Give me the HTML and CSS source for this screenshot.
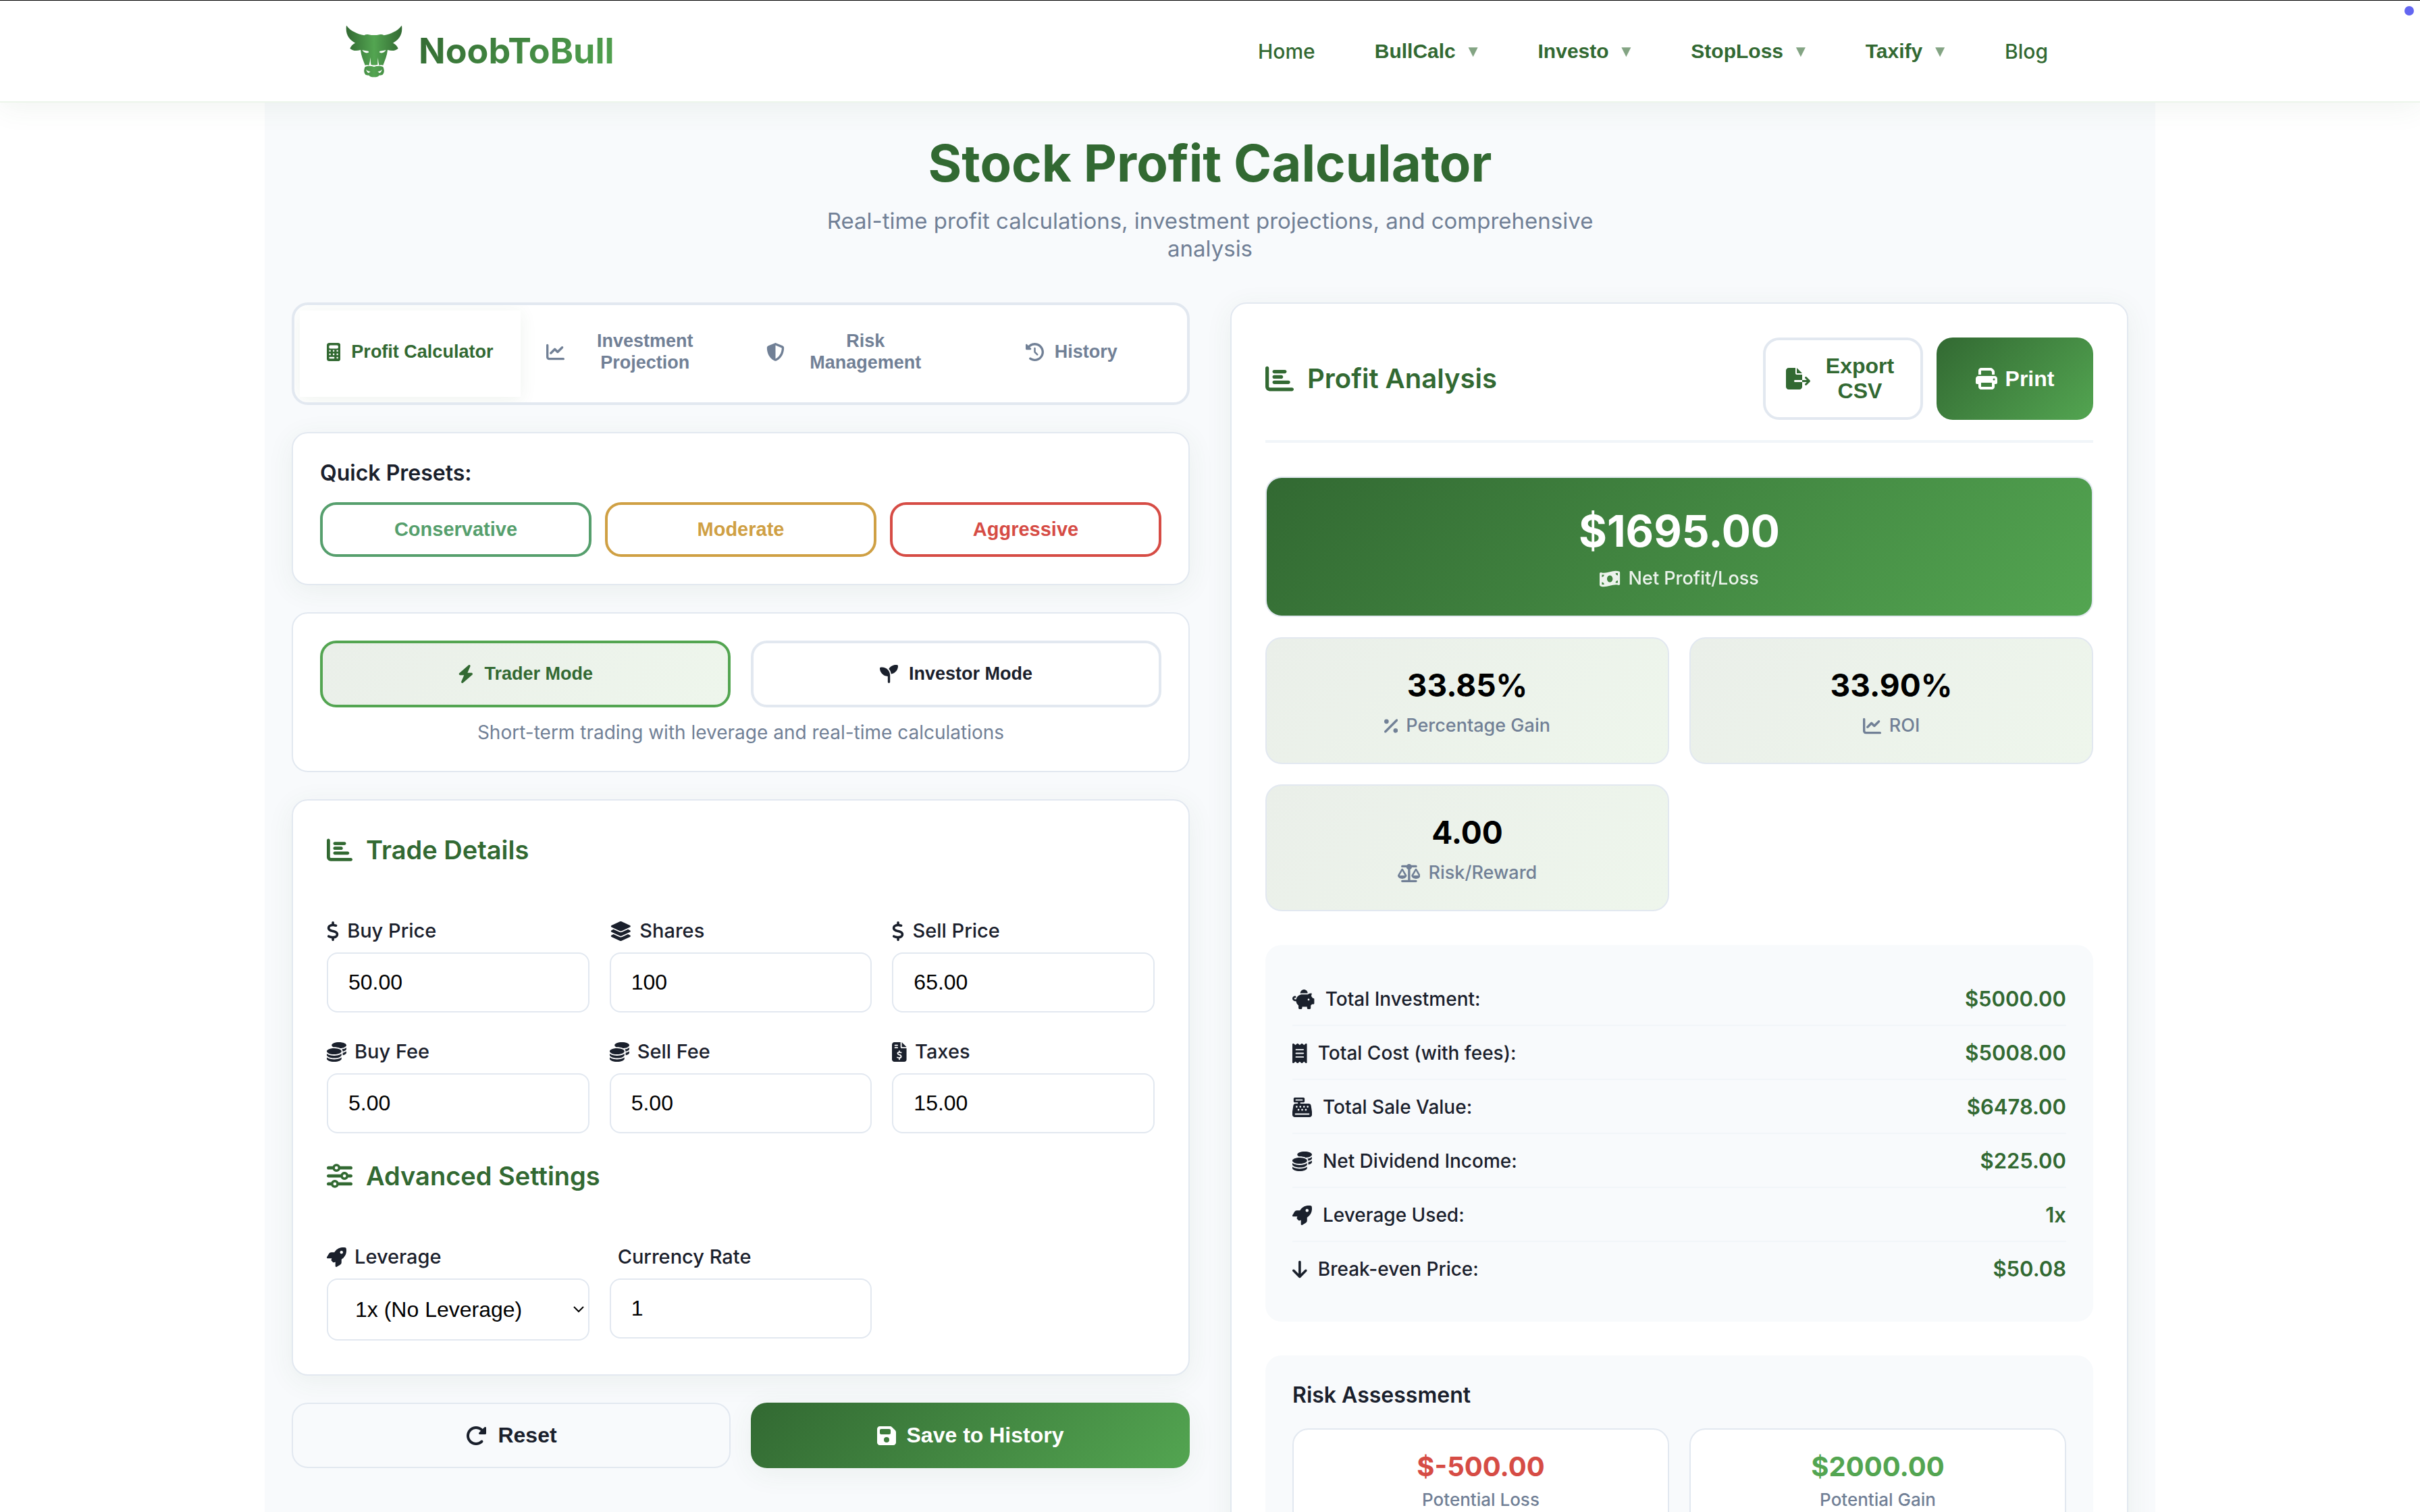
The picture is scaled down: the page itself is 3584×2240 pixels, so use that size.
FILE: index.html
```html
<!DOCTYPE html>
<html lang="en">
<head>
<meta charset="utf-8">
<meta name="viewport" content="width=device-width, initial-scale=1">
<title>Stock Profit Calculator | NoobToBull</title>
<link rel="stylesheet" href="styles.css">
</head>
<body>
<svg class="sprite" aria-hidden="true">
  <symbol id="i-bar" viewBox="0 0 512 512"><path d="M32 32c17.700 0 32 14.300 32 32V400c0 8.800 7.200 16 16 16H480c17.700 0 32 14.300 32 32s-14.300 32-32 32H80c-44.200 0-80-35.800-80-80V64C0 46.300 14.300 32 32 32zm96 96c0-17.700 14.300-32 32-32l192 0c17.700 0 32 14.300 32 32s-14.300 32-32 32l-192 0c-17.700 0-32-14.300-32-32zm32 64H288c17.700 0 32 14.300 32 32s-14.300 32-32 32H160c-17.700 0-32-14.300-32-32s14.300-32 32-32zm0 96H416c17.700 0 32 14.300 32 32s-14.300 32-32 32H160c-17.700 0-32-14.300-32-32s14.300-32 32-32z"/></symbol>
  <symbol id="i-line" viewBox="0 0 512 512"><path d="M64 64c0-17.700-14.300-32-32-32S0 46.300 0 64V400c0 44.200 35.800 80 80 80H480c17.700 0 32-14.300 32-32s-14.300-32-32-32H80c-8.800 0-16-7.200-16-16V64zm406.600 86.600c12.500-12.500 12.500-32.800 0-45.300s-32.800-12.500-45.300 0L320 210.700l-57.400-57.400c-12.500-12.500-32.800-12.500-45.300 0l-112 112c-12.500 12.500-12.500 32.800 0 45.300s32.800 12.500 45.300 0L240 221.300l57.400 57.400c12.500 12.500 32.800 12.500 45.300 0l128-128z"/></symbol>
  <symbol id="i-calc" viewBox="0 0 384 512"><path fill-rule="evenodd" d="M64 0C28.700 0 0 28.700 0 64V448c0 35.300 28.700 64 64 64H320c35.300 0 64-28.700 64-64V64c0-35.300-28.700-64-64-64H64zM96 64H288c17.700 0 32 14.300 32 32v32c0 17.700-14.300 32-32 32H96c-17.700 0-32-14.300-32-32V96c0-17.700 14.300-32 32-32zM64 224a24 24 0 1 0 48 0 24 24 0 1 0-48 0zM168 224a24 24 0 1 0 48 0 24 24 0 1 0-48 0zM272 224a24 24 0 1 0 48 0 24 24 0 1 0-48 0zM64 320a24 24 0 1 0 48 0 24 24 0 1 0-48 0zM168 320a24 24 0 1 0 48 0 24 24 0 1 0-48 0zM272 320a24 24 0 1 0 48 0 24 24 0 1 0-48 0zM88 392h104a24 24 0 0 1 0 48H88a24 24 0 0 1 0-48zM272 416a24 24 0 1 0 48 0 24 24 0 1 0-48 0z"/></symbol>
  <symbol id="i-shield" viewBox="0 0 512 512"><path d="M256 0c4.600 0 9.200 1 13.400 2.900L457.700 82.800c22 9.300 38.400 31 38.300 57.200c-.5 99.200-41.300 280.700-213.600 363.200c-16.700 8-36.100 8-52.800 0C57.300 420.700 16.500 239.200 16 140c-.1-26.200 16.300-47.900 38.300-57.200L242.700 2.900C246.800 1 251.400 0 256 0zm0 66.800V444.800C394 378 431.100 230.100 432 141.400L256 66.800l0 0z"/></symbol>
  <symbol id="i-history" viewBox="0 0 512 512"><path d="M75 75L41 41C25.900 25.900 0 36.600 0 57.900V168c0 13.300 10.700 24 24 24H134.100c21.400 0 32.100-25.900 17-41l-30.800-30.800C155 85.500 203 64 256 64c106 0 192 86 192 192s-86 192-192 192c-40.800 0-78.600-12.700-109.700-34.400c-14.500-10.100-34.400-6.600-44.600 7.900s-6.600 34.400 7.900 44.600C151.200 495 201.700 512 256 512c141.400 0 256-114.600 256-256S397.400 0 256 0C185.300 0 121.300 28.700 75 75zm181 53c-13.300 0-24 10.700-24 24V256c0 6.400 2.500 12.500 7 17l72 72c9.400 9.400 24.600 9.400 33.900 0s9.400-24.600 0-33.900l-65-65V152c0-13.300-10.700-24-24-24z"/></symbol>
  <symbol id="i-bolt" viewBox="0 0 448 512"><path d="M349.400 44.600c5.900-13.700 1.500-29.700-10.600-38.500s-28.600-8-39.900 1.800l-256 224c-10 8.800-13.600 22.900-8.900 35.300S50.700 288 64 288H175.500L98.600 467.400c-5.900 13.700-1.500 29.700 10.600 38.500s28.600 8 39.900-1.800l256-224c10-8.800 13.600-22.900 8.900-35.300s-16.600-20.700-30-20.700H272.500L349.400 44.600z"/></symbol>
  <symbol id="i-seed" viewBox="0 0 512 512"><path d="M512 32c0 113.600-84.600 207.500-194.200 222c-7.100-53.400-30.600-101.600-65.300-139.300C290.800 46.300 364 0 448 0h32c17.700 0 32 14.300 32 32zM0 96C0 78.300 14.300 64 32 64H64c123.700 0 224 100.300 224 224v32V480c0 17.700-14.300 32-32 32s-32-14.300-32-32V320C100.300 320 0 219.700 0 96z"/></symbol>
  <symbol id="i-dollar" viewBox="0 0 320 512"><path d="M160 0c17.700 0 32 14.300 32 32V67.700c1.600 .2 3.100 .4 4.700 .7c.4 .1 .7 .1 1.100 .2l48 8.800c17.400 3.200 28.900 19.900 25.700 37.200s-19.900 28.900-37.200 25.700l-47.500-8.700c-31.300-4.600-58.900-1.500-78.300 6.200s-27.200 18.300-29 28.100c-2 10.700-.5 16.700 1.200 20.400c1.800 3.900 5.500 8.300 12.800 13.200c16.300 10.700 41.300 17.700 73.700 26.300l2.900 .8c28.600 7.600 63.600 16.800 89.600 33.800c14.200 9.300 27.600 21.900 35.900 39.500c8.500 17.900 10.300 37.900 6.400 59.200c-6.900 38-33.100 63.400-65.600 76.700c-13.700 5.600-28.600 9.200-44.400 11V480c0 17.700-14.300 32-32 32s-32-14.300-32-32V445.100c-.4-.1-.9-.1-1.300-.2l-.2 0 0 0c-24.400-3.800-64.500-14.300-91.500-26.300c-16.100-7.200-23.400-26.100-16.200-42.200s26.100-23.400 42.200-16.200c20.900 9.300 55.300 18.500 75.200 21.600c31.900 4.700 58.200 2 76-5.300c16.900-6.900 24.600-16.900 26.800-28.900c1.900-10.600 .4-16.700-1.300-20.400c-1.900-4-5.600-8.400-13-13.300c-16.400-10.700-41.500-17.700-74-26.300l-2.800-.7 0 0C119.400 279.300 84.400 270 58.400 253c-14.200-9.300-27.500-22-35.800-39.600c-8.400-17.900-10.100-37.900-6.100-59.200C23.700 116 52.300 91.200 84.800 78.300c13.300-5.300 27.900-8.900 43.200-11V32c0-17.700 14.300-32 32-32z"/></symbol>
  <symbol id="i-layers" viewBox="0 0 576 512"><path d="M264.500 5.200c14.900-6.900 32.100-6.900 47 0l218.600 101c8.500 3.900 13.900 12.400 13.900 21.800s-5.400 17.900-13.900 21.800l-218.600 101c-14.900 6.900-32.100 6.900-47 0L45.900 149.800C37.400 145.800 32 137.300 32 128s5.400-17.900 13.900-21.800L264.500 5.200zM476.900 209.600l53.200 24.600c8.500 3.900 13.900 12.400 13.900 21.800s-5.400 17.900-13.900 21.800l-218.600 101c-14.900 6.900-32.100 6.900-47 0L45.900 277.800C37.400 273.800 32 265.300 32 256s5.400-17.900 13.900-21.800l53.200-24.600 152 70.200c23.400 10.800 50.400 10.800 73.800 0l152-70.200zm-152 198.200l152-70.200 53.200 24.600c8.500 3.900 13.900 12.400 13.900 21.800s-5.400 17.900-13.900 21.800l-218.600 101c-14.900 6.900-32.100 6.900-47 0L45.900 405.800C37.400 401.800 32 393.300 32 384s5.400-17.900 13.900-21.800l53.200-24.600 152 70.200c23.400 10.800 50.400 10.800 73.800 0z"/></symbol>
  <symbol id="i-coins" viewBox="0 0 512 512"><path d="M512 80c0 18-14.300 34.600-38.400 48c-29.100 16.100-72.500 27.500-122.300 30.900c-3.700-1.800-7.400-3.500-11.300-5C300.600 137.400 248.200 128 192 128c-8.300 0-16.400 .2-24.500 .6l-1.100-.6C142.300 114.600 128 98 128 80c0-44.200 86-80 192-80S512 35.800 512 80zM160.700 161.100c10.200-.7 20.700-1.100 31.300-1.100c62.200 0 117.400 12.300 152.500 31.400C369.300 204.900 384 221.700 384 240c0 4-.7 7.900-2.100 11.700c-4.600 13.200-17 25.300-35 35.500c-.5 .3-.9 .5-1.300 .7c-35 19.400-90.800 32-153.600 32c-59.600 0-112.900-11.300-148.200-29.100c-1.900-.9-3.700-1.900-5.500-2.900C14.300 274.600 0 258 0 240c0-34.800 53.400-64.500 128-75.400c10.500-1.500 21.400-2.700 32.700-3.500zM416 240c0-21.900-10.600-39.900-24.100-53.400c28.300-4.400 54.200-11.400 76.200-20.500c16.300-6.800 31.500-15.200 43.900-25.500V176c0 19.300-16.500 37.100-43.800 50.900c-14.600 7.400-32.400 13.700-52.400 18.500c.1-1.800 .2-3.500 .2-5.300zm-32 96c0 18-14.300 34.600-38.400 48c-1.800 1-3.600 1.900-5.500 2.900C304.900 404.700 251.600 416 192 416c-62.800 0-118.600-12.600-153.600-32C14.300 370.600 0 354 0 336V300.600c12.500 10.300 27.600 18.700 43.900 25.500C83.400 342.600 135.800 352 192 352s108.600-9.400 148.100-25.900c7.800-3.200 15.300-6.900 22.400-10.900c6.100-3.400 11.800-7.200 17.200-11.200c1.500-1.100 2.900-2.300 4.300-3.400V336zm32 0V278.100c19-4.200 36.500-9.500 52.100-16c16.300-6.800 31.500-15.200 43.900-25.500V272c0 10.500-5 21-14.900 30.900c-16.300 16.300-45 29.700-81.300 38.400c.1-1.700 .2-3.500 .2-5.300zM192 448c56.200 0 108.600-9.400 148.100-25.900c16.300-6.800 31.500-15.200 43.900-25.500V432c0 44.200-86 80-192 80S0 476.200 0 432V396.600c12.500 10.300 27.600 18.700 43.900 25.500C83.400 438.600 135.800 448 192 448z"/></symbol>
  <symbol id="i-invoice" viewBox="0 0 384 512"><path fill-rule="evenodd" d="M64 0C28.700 0 0 28.700 0 64V448c0 35.300 28.700 64 64 64H320c35.300 0 64-28.700 64-64V160H256c-17.700 0-32-14.300-32-32V0H64zM256 0V128H384L256 0zM64 80c0-8.800 7.200-16 16-16h64c8.800 0 16 7.200 16 16s-7.200 16-16 16H80c-8.800 0-16-7.200-16-16zm0 64c0-8.800 7.200-16 16-16h64c8.800 0 16 7.200 16 16s-7.200 16-16 16H80c-8.800 0-16-7.200-16-16z"/><path fill="none" stroke="#fff" stroke-width="32" stroke-linecap="round" d="M192 232v28M192 420v28M240 272c-18-8-34-11-50-11-24 0-42 12-42 32 0 47 92 26 92 78 0 25-20 40-47 40-20 0-37-6-53-13"/></symbol>
  <symbol id="i-sliders" viewBox="0 0 512 512"><path d="M0 416c0 17.700 14.300 32 32 32l54.700 0c12.300 28.300 40.500 48 73.300 48s61-19.700 73.300-48L480 448c17.700 0 32-14.300 32-32s-14.300-32-32-32l-246.700 0c-12.300-28.300-40.500-48-73.300-48s-61 19.700-73.300 48L32 384c-17.700 0-32 14.300-32 32zm128 0a32 32 0 1 1 64 0 32 32 0 1 1 -64 0zM320 256a32 32 0 1 1 64 0 32 32 0 1 1 -64 0zm32-80c-32.800 0-61 19.700-73.300 48L32 224c-17.700 0-32 14.300-32 32s14.300 32 32 32l246.700 0c12.300 28.300 40.500 48 73.300 48s61-19.700 73.300-48l54.700 0c17.700 0 32-14.300 32-32s-14.300-32-32-32l-54.700 0c-12.300-28.300-40.500-48-73.300-48zM192 128a32 32 0 1 1 0-64 32 32 0 1 1 0 64zm73.300-64C253 35.700 224.800 16 192 16s-61 19.700-73.300 48L32 64C14.300 64 0 78.300 0 96s14.300 32 32 32l86.700 0c12.300 28.300 40.500 48 73.300 48s61-19.700 73.300-48L480 128c17.700 0 32-14.300 32-32s-14.300-32-32-32L265.300 64z"/></symbol>
  <symbol id="i-rocket" viewBox="0 0 512 512"><path d="M156.600 384.900L125.700 354c-8.500-8.500-11.500-20.800-7.700-32.200c3-8.900 7-20.500 11.800-33.800L24 288c-8.600 0-16.600-4.600-20.900-12.100s-4.200-16.700 .2-24.100l52.500-88.500c13-21.900 36.500-35.300 61.900-35.300l82.300 0c2.400-4 4.800-7.700 7.200-11.300C289.100-4.100 411.100-8.100 483.900 5.300c11.600 2.100 20.600 11.200 22.800 22.800c13.400 72.900 9.300 194.800-111.400 276.700c-3.500 2.400-7.300 4.800-11.300 7.200v82.300c0 25.400-13.400 49-35.300 61.900l-88.500 52.500c-7.400 4.400-16.600 4.500-24.100 .2s-12.100-12.200-12.100-20.900V380.800c-14.100 4.900-26.400 8.900-35.700 11.900c-11.200 3.600-23.400 .5-31.800-7.800zM384 168a40 40 0 1 0 0-80 40 40 0 1 0 0 80z"/></symbol>
  <symbol id="i-redo" viewBox="0 0 512 512"><path d="M463.500 224H472c13.300 0 24-10.700 24-24V72c0-9.700-5.800-18.500-14.800-22.200s-19.300-1.700-26.200 5.200L413.400 96.600c-87.600-86.500-228.700-86.200-315.800 1c-87.500 87.500-87.500 229.300 0 316.800s229.300 87.500 316.800 0c12.500-12.500 12.500-32.800 0-45.300s-32.800-12.500-45.300 0c-62.500 62.500-163.800 62.500-226.300 0s-62.500-163.800 0-226.300c62.200-62.200 162.700-62.500 225.300-1L327 183c-6.900 6.900-8.900 17.200-5.200 26.200s12.500 14.800 22.200 14.800H463.500z"/></symbol>
  <symbol id="i-save" viewBox="0 0 448 512"><path fill-rule="evenodd" d="M64 32C28.700 32 0 60.700 0 96V416c0 35.300 28.700 64 64 64H384c35.300 0 64-28.700 64-64V173.300c0-17-6.700-33.300-18.700-45.300L352 50.700C340 38.700 323.700 32 306.700 32H64zm0 96c0-17.700 14.300-32 32-32H288c17.700 0 32 14.300 32 32v64c0 17.700-14.300 32-32 32H96c-17.700 0-32-14.300-32-32V128zM224 288a64 64 0 1 1 0 128 64 64 0 1 1 0-128z"/></symbol>
  <symbol id="i-export" viewBox="0 0 576 512"><path d="M0 64C0 28.700 28.700 0 64 0H224V128c0 17.700 14.300 32 32 32H384V288H216c-13.300 0-24 10.700-24 24s10.700 24 24 24H384V448c0 35.300-28.700 64-64 64H64c-35.300 0-64-28.700-64-64V64zM384 336V288H494.100l-39-39c-9.400-9.400-9.400-24.600 0-33.900s24.600-9.400 33.900 0l80 80c9.400 9.400 9.400 24.600 0 33.900l-80 80c-9.400 9.400-24.600 9.400-33.900 0s-9.400-24.600 0-33.900l39-39H384zm0-208H256V0L384 128z"/></symbol>
  <symbol id="i-print" viewBox="0 0 512 512"><path fill-rule="evenodd" d="M128 0C92.700 0 64 28.700 64 64v96h64V64H354.700L384 93.300V160h64V93.300c0-17-6.700-33.300-18.700-45.300L400 18.700C388 6.700 371.700 0 354.700 0H128zM384 352v96H128V352H384zm64 32h32c17.700 0 32-14.300 32-32V256c0-35.300-28.700-64-64-64H64c-35.300 0-64 28.700-64 64v96c0 17.700 14.300 32 32 32H64v64c0 35.300 28.700 64 64 64H384c35.300 0 64-28.700 64-64V384zM432 248a24 24 0 1 1 0 48 24 24 0 1 1 0-48z"/></symbol>
  <symbol id="i-bill" viewBox="0 0 576 512"><path fill-rule="evenodd" d="M0 112.500V422.300c0 18 10.100 35 27 41.300c87 32.500 174 10.300 261-11.900c79.800-20.300 159.600-40.700 239.300-18.900c23 6.300 48.700-9.500 48.700-33.400V89.700c0-18-10.100-35-27-41.300C462 15.900 375 38.100 288 60.300C208.200 80.600 128.400 100.900 48.700 79.100C25.600 72.800 0 88.600 0 112.500zM288 352c-44.200 0-80-43-80-96s35.800-96 80-96s80 43 80 96s-35.800 96-80 96zM64 352c35.300 0 64 28.700 64 64H64V352zm64-208c0 35.300-28.700 64-64 64V144h64zM512 304v64H448c0-35.300 28.700-64 64-64zM448 96h64v64c-35.300 0-64-28.700-64-64z"/></symbol>
  <symbol id="i-percent" viewBox="0 0 384 512"><path d="M374.600 118.600c12.500-12.500 12.500-32.800 0-45.300s-32.800-12.500-45.300 0l-320 320c-12.500 12.500-12.500 32.800 0 45.300s32.800 12.500 45.300 0l320-320zM128 128A64 64 0 1 0 0 128a64 64 0 1 0 128 0zM384 384a64 64 0 1 0 -128 0 64 64 0 1 0 128 0z"/></symbol>
  <symbol id="i-scale" viewBox="0 0 640 512"><path d="M384 32H512c17.700 0 32 14.300 32 32s-14.300 32-32 32H398.400c-5.200 25.800-22.900 47.100-46.400 57.300V448H512c17.700 0 32 14.300 32 32s-14.300 32-32 32H320 128c-17.700 0-32-14.300-32-32s14.300-32 32-32H288V153.300c-23.500-10.300-41.200-31.600-46.400-57.300H128c-17.700 0-32-14.300-32-32s14.300-32 32-32H256c14.600-19.400 37.800-32 64-32s49.400 12.600 64 32zm55.600 288H584.400L512 195.800 439.600 320zM512 416c-62.900 0-115.200-34-126-78.900c-2.600-11 1-22.300 6.700-32.100l95.200-163.200c5-8.600 14.200-13.800 24.100-13.800s19.100 5.300 24.100 13.800l95.200 163.200c5.700 9.800 9.300 21.100 6.700 32.100C627.200 382 574.900 416 512 416zM126.800 195.800L54.400 320H199.300L126.800 195.800zM.9 337.100c-2.600-11 1-22.300 6.700-32.100l95.200-163.200c5-8.600 14.200-13.800 24.100-13.800s19.100 5.300 24.100 13.800l95.200 163.200c5.700 9.800 9.300 21.100 6.700 32.100C242 382 189.700 416 126.800 416S11.700 382 .9 337.100z"/></symbol>
  <symbol id="i-piggy" viewBox="0 0 576 512"><path d="M400 96l0 .7c-5.300-.4-10.600-.7-16-.7H256c-16.500 0-32.500 2.100-47.800 6c-.1-2-.2-4-.2-6c0-53 43-96 96-96s96 43 96 96zm-16 32c3.500 0 7 .1 10.400 .3c4.200 .3 8.400 .7 12.600 1.300C424.600 109.100 450.800 96 480 96h11.500c10.400 0 18 9.800 15.500 19.900l-13.800 55.200c15.800 14.800 28.700 32.800 37.500 52.900H544c17.700 0 32 14.300 32 32v96c0 17.700-14.300 32-32 32H512c-9.100 12.100-19.900 22.900-32 32v64c0 17.700-14.300 32-32 32H416c-17.700 0-32-14.300-32-32V448H256v32c0 17.700-14.300 32-32 32H192c-17.700 0-32-14.300-32-32V416c-34.900-26.200-58.700-66.300-63.200-112H68c-37.600 0-68-30.400-68-68s30.400-68 68-68h4c13.300 0 24 10.700 24 24s-10.700 24-24 24H68c-11 0-20 9-20 20s9 20 20 20H99.200c12.100-59.800 57.700-107.500 116.300-122.800c12.900-3.400 26.500-5.200 40.500-5.200H384zm64 136a24 24 0 1 0 -48 0 24 24 0 1 0 48 0z"/></symbol>
  <symbol id="i-receipt" viewBox="0 0 384 512"><path fill-rule="evenodd" d="M14 2.200C22.500-1.700 32.500-.3 39.600 5.800L80 40.400 120.400 5.800c9-7.700 22.300-7.700 31.200 0L192 40.400 232.400 5.800c9-7.700 22.300-7.700 31.200 0L304 40.400 344.400 5.800c7.100-6.100 17.100-7.500 25.600-3.600s14 12.400 14 21.800V488c0 9.400-5.500 17.900-14 21.800s-18.500 2.500-25.600-3.600L304 471.600l-40.400 34.600c-9 7.700-22.300 7.700-31.200 0L192 471.600l-40.400 34.600c-9 7.700-22.300 7.700-31.200 0L80 471.600 39.600 506.200c-7.100 6.100-17.100 7.500-25.600 3.600S0 497.400 0 488V24C0 14.600 5.500 6.100 14 2.200zM96 144c-8.800 0-16 7.200-16 16s7.200 16 16 16H288c8.800 0 16-7.200 16-16s-7.200-16-16-16H96zM80 352c0 8.800 7.200 16 16 16H288c8.800 0 16-7.200 16-16s-7.200-16-16-16H96c-8.800 0-16 7.200-16 16zM96 240c-8.800 0-16 7.200-16 16s7.200 16 16 16H288c8.800 0 16-7.200 16-16s-7.200-16-16-16H96z"/></symbol>
  <symbol id="i-register" viewBox="0 0 512 512"><path fill-rule="evenodd" d="M64 0C46.300 0 32 14.300 32 32V96c0 17.700 14.300 32 32 32h80v32H87c-31.600 0-58.500 23.100-63.300 54.400L1.100 364.100C.4 368.800 0 373.600 0 378.400V448c0 35.300 28.700 64 64 64H448c35.300 0 64-28.700 64-64V378.400c0-4.800-.4-9.600-1.100-14.400L488.200 214.400C483.500 183.100 456.600 160 425 160H208V128h80c17.700 0 32-14.300 32-32V32c0-17.700-14.300-32-32-32H64zM96 48H256c8.800 0 16 7.200 16 16s-7.200 16-16 16H96c-8.800 0-16-7.200-16-16s7.200-16 16-16zM64 432c0-8.800 7.200-16 16-16H432c8.800 0 16 7.200 16 16s-7.200 16-16 16H80c-8.800 0-16-7.200-16-16zM88 240a24 24 0 1 0 48 0 24 24 0 1 0-48 0zM184 240a24 24 0 1 0 48 0 24 24 0 1 0-48 0zM280 240a24 24 0 1 0 48 0 24 24 0 1 0-48 0zM376 240a24 24 0 1 0 48 0 24 24 0 1 0-48 0zM136 320a24 24 0 1 0 48 0 24 24 0 1 0-48 0zM232 320a24 24 0 1 0 48 0 24 24 0 1 0-48 0zM328 320a24 24 0 1 0 48 0 24 24 0 1 0-48 0z"/></symbol>
  <symbol id="i-down" viewBox="0 0 384 512"><path d="M169.400 470.600c12.500 12.500 32.800 12.500 45.300 0l160-160c12.500-12.500 12.500-32.800 0-45.300s-32.800-12.500-45.300 0L224 370.800 224 64c0-17.700-14.300-32-32-32s-32 14.300-32 32l0 306.700L54.600 265.400c-12.500-12.500-32.800-12.500-45.300 0s-12.500 32.800 0 45.300l160 160z"/></symbol>
</svg>

<header class="topbar">
  <div class="topbar-inner">
    <a class="brand" href="#">
      <svg class="bull" viewBox="36 36 252 234" aria-hidden="true">
        <defs><linearGradient id="bullFill" x1="0" x2="1" y1="0" y2="0"><stop offset="0" stop-color="#326932"/><stop offset=".5" stop-color="#53a551"/><stop offset="1" stop-color="#326932"/></linearGradient></defs>
        <path fill="url(#bullFill)" fill-rule="evenodd" d="M39 38C56 62 88 76 118 82Q126 77 134 78Q142 79 150 81H174Q182 79 190 78Q198 77 206 82C236 76 268 62 285 38C290 76 275 101 246 116Q262 124 269 140Q252 156 222 147C220 172 210 194 202 215Q192 212 185 216Q179 197 180 180Q177 196 178 212Q162 217 148 212Q147 196 145 180Q145 197 139 216Q132 212 122 215C114 194 104 172 102 147Q72 156 55 140Q62 124 78 116C49 101 34 76 39 38zM109 148Q120 164 136 159Q141 156 136 152zM215 148Q204 164 188 159Q183 156 188 152zM122 222Q142 214 162 222Q182 214 202 222Q212 244 200 257Q192 260 184 260Q180 268 162 268Q144 268 140 260Q132 260 124 257Q112 244 122 222zM127 234Q129 246 138 250L146 243Q134 244 127 234zM197 234Q195 246 186 250L178 243Q190 244 197 234z"/>
      </svg>
      <span class="brand-name">NoobToBull</span>
    </a>
    <nav class="nav" aria-label="Main">
      <a class="nav-link" href="#">Home</a>
      <button class="nav-menu" type="button">BullCalc <span class="caret">▼</span></button>
      <button class="nav-menu" type="button">Investo <span class="caret">▼</span></button>
      <button class="nav-menu" type="button">StopLoss <span class="caret">▼</span></button>
      <button class="nav-menu" type="button">Taxify <span class="caret">▼</span></button>
      <a class="nav-link" href="#">Blog</a>
    </nav>
  </div>
  <span class="status-dot"></span>
</header>

<main class="page">
  <div class="intro">
    <h1>Stock Profit Calculator</h1>
    <p>Real-time profit calculations, investment projections, and comprehensive analysis</p>
  </div>

  <div class="columns">
    <div class="stack">
      <div class="tabs" role="tablist">
        <button class="tab active" role="tab" type="button" aria-selected="true"><svg class="ico w384"><use href="#i-calc"/></svg><span>Profit Calculator</span></button>
        <button class="tab" role="tab" type="button"><svg class="ico"><use href="#i-line"/></svg><span class="grow">Investment Projection</span></button>
        <button class="tab" role="tab" type="button"><svg class="ico"><use href="#i-shield"/></svg><span class="grow">Risk Management</span></button>
        <button class="tab" role="tab" type="button"><svg class="ico"><use href="#i-history"/></svg><span>History</span></button>
      </div>

      <section class="card">
        <h2 class="small-title">Quick Presets:</h2>
        <div class="presets">
          <button class="preset low" type="button">Conservative</button>
          <button class="preset mid" type="button">Moderate</button>
          <button class="preset high" type="button">Aggressive</button>
        </div>
      </section>

      <section class="card flat">
        <div class="modes">
          <button class="mode active" type="button"><svg class="ico w448"><use href="#i-bolt"/></svg>Trader Mode</button>
          <button class="mode" type="button"><svg class="ico"><use href="#i-seed"/></svg>Investor Mode</button>
        </div>
        <p class="mode-note">Short-term trading with leverage and real-time calculations</p>
      </section>

      <form class="card form">
        <h2 class="form-title"><svg class="ico"><use href="#i-bar"/></svg>Trade Details</h2>
        <div class="fields">
          <div class="field"><label for="buy"><svg class="ico w320"><use href="#i-dollar"/></svg>Buy Price</label><input id="buy" type="text" value="50.00"></div>
          <div class="field"><label for="shares"><svg class="ico w576"><use href="#i-layers"/></svg>Shares</label><input id="shares" type="text" value="100"></div>
          <div class="field"><label for="sell"><svg class="ico w320"><use href="#i-dollar"/></svg>Sell Price</label><input id="sell" type="text" value="65.00"></div>
          <div class="field"><label for="buyfee"><svg class="ico"><use href="#i-coins"/></svg>Buy Fee</label><input id="buyfee" type="text" value="5.00"></div>
          <div class="field"><label for="sellfee"><svg class="ico"><use href="#i-coins"/></svg>Sell Fee</label><input id="sellfee" type="text" value="5.00"></div>
          <div class="field"><label for="taxes"><svg class="ico w384"><use href="#i-invoice"/></svg>Taxes</label><input id="taxes" type="text" value="15.00"></div>
        </div>
        <h2 class="form-title later"><svg class="ico"><use href="#i-sliders"/></svg>Advanced Settings</h2>
        <div class="fields">
          <div class="field"><label for="leverage"><svg class="ico"><use href="#i-rocket"/></svg>Leverage</label>
            <div class="select-wrap"><select id="leverage"><option>1x (No Leverage)</option><option>2x</option><option>5x</option></select><svg class="chevron" viewBox="0 0 16 10" aria-hidden="true"><path d="M1 1l7 7 7-7"/></svg></div></div>
          <div class="field"><label class="bare" for="rate">Currency Rate</label><input id="rate" type="text" value="1"></div>
        </div>
      </form>

      <div class="actions">
        <button class="action" type="button"><svg class="ico"><use href="#i-redo"/></svg>Reset</button>
        <button class="action primary" type="button"><svg class="ico w448"><use href="#i-save"/></svg>Save to History</button>
      </div>
    </div>

    <section class="card results">
      <div class="results-head">
        <h2 class="results-title"><svg class="ico"><use href="#i-bar"/></svg>Profit Analysis</h2>
        <div class="results-tools">
          <button class="tool" type="button"><svg class="ico w576"><use href="#i-export"/></svg><span class="grow">Export CSV</span></button>
          <button class="tool primary" type="button"><svg class="ico"><use href="#i-print"/></svg>Print</button>
        </div>
      </div>

      <div class="metrics">
        <div class="metric main"><div class="metric-value">$1695.00</div><div class="metric-label"><svg class="ico w576"><use href="#i-bill"/></svg>Net Profit/Loss</div></div>
        <div class="metric"><div class="metric-value">33.85%</div><div class="metric-label"><svg class="ico w384"><use href="#i-percent"/></svg>Percentage Gain</div></div>
        <div class="metric"><div class="metric-value">33.90%</div><div class="metric-label"><svg class="ico"><use href="#i-line"/></svg>ROI</div></div>
        <div class="metric"><div class="metric-value">4.00</div><div class="metric-label"><svg class="ico w640"><use href="#i-scale"/></svg>Risk/Reward</div></div>
      </div>

      <dl class="details">
        <div class="row"><dt><svg class="ico w576"><use href="#i-piggy"/></svg>Total Investment:</dt><dd>$5000.00</dd></div>
        <div class="row"><dt><svg class="ico w384"><use href="#i-receipt"/></svg>Total Cost (with fees):</dt><dd>$5008.00</dd></div>
        <div class="row"><dt><svg class="ico"><use href="#i-register"/></svg>Total Sale Value:</dt><dd>$6478.00</dd></div>
        <div class="row"><dt><svg class="ico"><use href="#i-coins"/></svg>Net Dividend Income:</dt><dd>$225.00</dd></div>
        <div class="row"><dt><svg class="ico"><use href="#i-rocket"/></svg>Leverage Used:</dt><dd>1x</dd></div>
        <div class="row"><dt><svg class="ico w384"><use href="#i-down"/></svg>Break-even Price:</dt><dd>$50.08</dd></div>
      </dl>

      <div class="risk">
        <h3 class="small-title">Risk Assessment</h3>
        <div class="risk-grid">
          <div class="risk-card"><div class="risk-value loss">$-500.00</div><div class="risk-label">Potential Loss</div></div>
          <div class="risk-card"><div class="risk-value gain">$2000.00</div><div class="risk-label">Potential Gain</div></div>
        </div>
      </div>
    </section>
  </div>
</main>
</body>
</html>
```
FILE: styles.css
```css
:root {
  --green-dark: #326932;
  --green: #53a551;
  --gradient: linear-gradient(135deg, #326932 0%, #53a551 100%);
  --tint: linear-gradient(135deg, #eaefe9 0%, #eef6ec 100%);
  --ink: #1a202c;
  --muted: #718096;
  --line: #e2e8f0;
  --soft: #f8fafc;
  --shadow: 0 8px 40px rgba(50, 105, 50, .07);
  --ui: Inter, "Noto Sans", sans-serif;
  --control: "Liberation Sans", Arial, sans-serif;
}
* { box-sizing: border-box; }
html { scrollbar-width: none; }
body { margin: 0; background: #fff; color: var(--ink); font-family: var(--ui); }
h1, h2, h3, p, dl, dd { margin: 0; }
button { font-family: var(--control); font-weight: 700; margin: 0; cursor: pointer; }
.sprite { display: none; }

/* icons: height comes from --s, width from the glyph's own box */
.ico { flex: none; width: var(--s); height: var(--s); fill: currentColor; }
.ico.w320 { width: calc(var(--s) * .625); }
.ico.w384 { width: calc(var(--s) * .75); }
.ico.w448 { width: calc(var(--s) * .875); }
.ico.w576 { width: calc(var(--s) * 1.125); }
.ico.w640 { width: calc(var(--s) * 1.25); }

/* top bar */
.topbar { position: relative; z-index: 1; background: #fff; border-top: 1px solid #000; border-bottom: 2px solid #ecf5ea; box-shadow: var(--shadow); }
.topbar-inner { max-width: 2560px; margin: 0 auto; min-height: 149px; display: flex; align-items: center; justify-content: space-between; }
.brand { display: flex; align-items: center; gap: 24px; text-decoration: none; }
.bull { width: 84px; height: 78px; }
.brand-name { font-size: 52px; font-weight: 700; line-height: 70px; background: var(--gradient); -webkit-background-clip: text; background-clip: text; color: transparent; }
.nav { display: flex; align-items: center; gap: 10px; }
.nav-link, .nav-menu { padding: 16px 39px; font-size: 30px; line-height: 36px; color: var(--green-dark); }
.nav-link { font-weight: 500; text-decoration: none; }
.nav-menu { display: flex; align-items: center; gap: 14px; background: none; border: 0; padding-right: 35px; }
.caret { font-size: 24px; line-height: 24px; opacity: .6; }
.status-dot { position: absolute; top: 8px; right: 9px; width: 14px; height: 14px; border-radius: 50%; background: #6366f1; }

/* page */
.page { max-width: 2800px; margin: 0 auto; padding: 41px 40px; background: var(--soft); }
.intro { text-align: center; margin-bottom: 59px; }
h1 { font-size: 76px; line-height: 96px; font-weight: 700; color: var(--green-dark); margin-bottom: 18px; }
.intro p { max-width: 1200px; margin: 0 auto; font-size: 33px; line-height: 41px; color: var(--muted); }
.columns { display: grid; grid-template-columns: 1fr 1fr; gap: 60px; align-items: start; }
.stack { display: flex; flex-direction: column; gap: 40px; }

.card { background: #fff; border: 2px solid var(--line); border-radius: 24px; padding: 40px; box-shadow: var(--shadow); }
.card.flat { box-shadow: none; }
.small-title { font-size: 32px; line-height: 38px; font-weight: 600; }

/* tabs */
.tabs { display: grid; grid-template-columns: repeat(4, 1fr); padding: 8px; background: #fff; border: 4px solid var(--line); border-radius: 24px; overflow: hidden; }
.tab { --s: 27px; min-height: 128px; display: flex; align-items: center; justify-content: center; gap: 16px; padding: 0 38px 6px; background: none; border: 0; color: var(--muted); font-size: 27px; line-height: 32px; }
.tab.active { background: #fff; color: var(--green-dark); box-shadow: 0 4px 24px rgba(50, 105, 50, .08); }
.grow { flex: 1; text-align: center; }

/* presets and modes */
.presets { display: grid; grid-template-columns: repeat(3, 1fr); gap: 20px; margin-top: 24px; }
.preset { height: 81px; background: #fff; border: 4px solid currentColor; border-radius: 24px; font-size: 29px; }
.low { color: #569f6d; }
.mid { color: #cfa044; }
.high { color: #d64c45; }
.modes { display: grid; grid-template-columns: 1fr 1fr; gap: 30px; }
.mode { --s: 27px; height: 99px; display: flex; align-items: center; justify-content: center; gap: 16px; background: #fff; border: 4px solid var(--line); border-radius: 24px; color: var(--ink); font-size: 27px; }
.mode.active { background: var(--tint); border-color: var(--green); color: var(--green-dark); }
.mode-note { margin-top: 20px; text-align: center; color: var(--muted); font-size: 28px; line-height: 34px; }

/* form */
.form { padding: 50px; }
.form-title { --s: 38px; display: flex; align-items: center; gap: 20px; font-size: 38px; line-height: 46px; font-weight: 600; color: var(--green-dark); margin-bottom: 79px; }
.form-title.later { margin-top: 40px; }
.fields { display: grid; grid-template-columns: repeat(3, 1fr); gap: 40px 30px; align-items: start; }
.field { display: flex; flex-direction: column; gap: 14px; min-width: 0; }
label { --s: 29px; display: flex; align-items: center; gap: 12px; font-size: 29px; line-height: 36px; font-weight: 500; }
label.bare { padding-left: 12px; }
input, select { width: 100%; font-family: var(--control); font-size: 32px; color: #000; background: #fff; border: 2px solid var(--line); border-radius: 16px; }
input { height: 89px; padding: 0 30px; }
select { height: 92px; padding: 0 60px 0 40px; appearance: none; }
.select-wrap { position: relative; }
.chevron { position: absolute; right: 8px; top: 41px; width: 16px; height: 10px; fill: none; stroke: #000; stroke-width: 2; pointer-events: none; }

.actions { display: grid; grid-template-columns: 1fr 1fr; gap: 30px; }
.action { --s: 32px; height: 97px; display: flex; align-items: center; justify-content: center; gap: 16px; border: 2px solid var(--line); border-radius: 24px; background: var(--soft); color: var(--ink); font-size: 32px; }
.action.primary { border: 0; background: var(--gradient); color: #fff; box-shadow: var(--shadow); }

/* results */
.results { padding: 50px; }
.results-head { display: flex; align-items: center; justify-content: space-between; padding-bottom: 30px; border-bottom: 4px solid #f1f5f9; margin-bottom: 50px; }
.results-title { --s: 42px; display: flex; align-items: center; gap: 20px; font-size: 40px; line-height: 50px; font-weight: 600; color: var(--green-dark); }
.results-tools { display: flex; gap: 20px; }
.tool { --s: 32px; height: 122px; width: 237px; display: flex; align-items: center; justify-content: center; gap: 14px; padding: 0 30px; background: #fff; border: 4px solid var(--line); border-radius: 24px; color: var(--green-dark); font-size: 32px; line-height: 37px; }
.tool.primary { width: 232px; gap: 12px; border: 0; background: var(--gradient); color: #fff; }

.metrics { display: grid; grid-template-columns: 1fr 1fr; gap: 30px; }
.metric { padding: 40px 40px 38px; text-align: center; background: var(--tint); border: 2px solid var(--line); border-radius: 24px; }
.metric-value { font-size: 46px; line-height: 58px; font-weight: 700; color: #000; margin-bottom: 14px; }
.metric-label { --s: 27px; display: flex; align-items: center; justify-content: center; gap: 12px; font-size: 27px; line-height: 34px; font-weight: 500; color: var(--muted); }
.metric.main { grid-column: 1 / -1; background: var(--gradient) padding-box, var(--line) border-box; border-color: transparent; }
.main .metric-value { font-size: 64px; line-height: 78px; color: #fff; }
.main .metric-label { color: #fff; opacity: .9; }

.details { margin-top: 50px; padding: 40px; background: var(--soft); border-radius: 24px; }
.row { display: flex; align-items: center; justify-content: space-between; height: 80px; padding-top: 2px; border-bottom: 2px solid #f1f5f9; }
.row:last-child { height: 78px; border: 0; }
dt { --s: 29px; display: flex; align-items: center; gap: 16px; font-size: 28px; line-height: 36px; font-weight: 500; }
dd { font-size: 31px; line-height: 38px; font-weight: 600; color: var(--green-dark); }

.risk { margin-top: 50px; padding: 40px; background: var(--soft); border-radius: 24px; }
.risk-grid { display: grid; grid-template-columns: 1fr 1fr; gap: 30px; margin-top: 30px; }
.risk-card { padding: 30px; text-align: center; background: #fff; border: 2px solid var(--line); border-radius: 24px; }
.risk-value { font-size: 40px; line-height: 50px; font-weight: 700; margin-bottom: 8px; }
.loss { color: #d64c45; }
.gain { color: var(--green); }
.risk-label { font-size: 26px; line-height: 32px; font-weight: 500; color: var(--muted); }
```
